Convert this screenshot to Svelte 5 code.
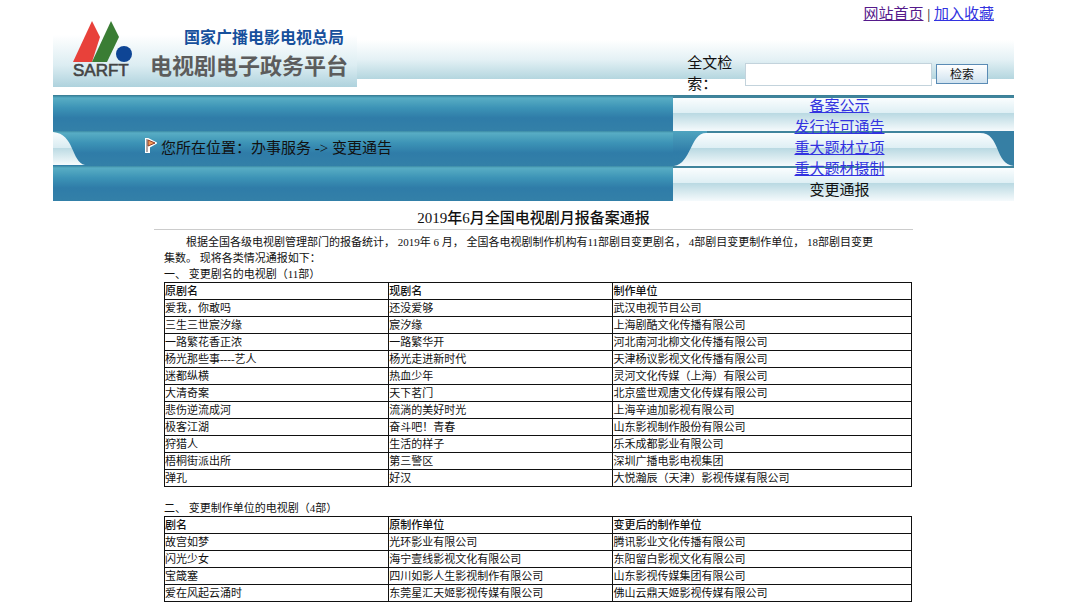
<script lang="ts">
  type Section = { heading: string; columns: string[]; rows: string[][] };

  let keyword = '';

  const navItems = ['备案公示', '发行许可通告', '重大题材立项', '重大题材摄制'];

  const sections: Section[] = [
    {
      heading: '一、 变更剧名的电视剧（11部）',
      columns: ['原剧名', '现剧名', '制作单位'],
      rows: [
        ['爱我，你敢吗', '还没爱够', '武汉电视节目公司'],
        ['三生三世宸汐缘', '宸汐缘', '上海剧酷文化传播有限公司'],
        ['一路繁花香正浓', '一路繁华开', '河北南河北柳文化传播有限公司'],
        ['杨光那些事----艺人', '杨光走进新时代', '天津杨议影视文化传播有限公司'],
        ['迷都纵横', '热血少年', '灵河文化传媒（上海）有限公司'],
        ['大清奇案', '天下茗门', '北京盛世观唐文化传媒有限公司'],
        ['悲伤逆流成河', '流淌的美好时光', '上海辛迪加影视有限公司'],
        ['极客江湖', '奋斗吧！青春', '山东影视制作股份有限公司'],
        ['狩猎人', '生活的样子', '乐禾成都影业有限公司'],
        ['梧桐街派出所', '第三警区', '深圳广播电影电视集团'],
        ['弹孔', '好汉', '大悦瀚辰（天津）影视传媒有限公司'],
      ],
    },
    {
      heading: '二、 变更制作单位的电视剧（4部）',
      columns: ['剧名', '原制作单位', '变更后的制作单位'],
      rows: [
        ['故宫如梦', '光环影业有限公司', '腾讯影业文化传播有限公司'],
        ['闪光少女', '海宁壹线影视文化有限公司', '东阳留白影视文化有限公司'],
        ['宝箴塞', '四川如影人生影视制作有限公司', '山东影视传媒集团有限公司'],
        ['爱在风起云涌时', '东莞星汇天姬影视传媒有限公司', '佛山云鼎天姬影视传媒有限公司'],
      ],
    },
  ];
</script>

<div class="page">
  <header class="header">
    <div class="logo">
      <svg class="emblem" viewBox="0 0 60 58" role="img" aria-label="SARFT">
        <path d="M19 0 L27 16 L19 41 L0 41 Z" fill="#e8413a" />
        <path d="M38 0 L46 16 L34 41 L19 41 Z" fill="#3a7d34" />
        <circle cx="51" cy="33" r="8" fill="#0e4595" />
        <text x="0" y="55" class="emblem-text">SARFT</text>
      </svg>
      <div class="names">
        <span class="org">国家广播电影电视总局</span>
        <span class="platform">电视剧电子政务平台</span>
      </div>
    </div>
    <div class="tools">
      <div class="top-links">
        <a class="visited" href="#home">网站首页</a> | <a href="#favorite">加入收藏</a>
      </div>
      <form class="search" on:submit|preventDefault>
        <label for="keyword">全文检索：</label>
        <input id="keyword" type="text" bind:value={keyword} />
        <button type="submit">检索</button>
      </form>
    </div>
  </header>

  <div class="banner">
    <div class="location">
      <svg class="curve start" viewBox="0 0 34 35" preserveAspectRatio="none" aria-hidden="true">
        <defs>
          <linearGradient id="pale" x1="0" y1="0" x2="0" y2="1">
            <stop offset="0" stop-color="#f8fcfd" />
            <stop offset="0.5" stop-color="#d8ebf1" />
            <stop offset="0.5" stop-color="#bddbe4" />
            <stop offset="1" stop-color="#f6fbfc" />
          </linearGradient>
        </defs>
        <path d="M0 1 C22 3 18 31 32 34 L0 34 Z" fill="url(#pale)" />
      </svg>
      <svg class="flag" viewBox="0 0 12 15" aria-hidden="true">
        <path d="M1 1 H3 L11 5 L4 9 V14 H1 Z" fill="#fff" stroke="#fff" stroke-width="2" />
        <path d="M3 2 L10 5 L3 8 Z" fill="#f39a56" stroke="#8f3e28" stroke-width="1" />
        <path d="M2 1 V14" stroke="#6b5550" stroke-width="1" />
      </svg>
      <span>您所在位置：办事服务 -&gt; 变更通告</span>
    </div>
    <nav class="nav">
      <svg class="curve start" viewBox="0 0 34 35" preserveAspectRatio="none" aria-hidden="true">
        <defs>
          <linearGradient id="teal" x1="0" y1="0" x2="0" y2="1">
            <stop offset="0" stop-color="#4fa4bf" />
            <stop offset="0.6" stop-color="#2f7ca8" />
            <stop offset="1" stop-color="#3380a8" />
          </linearGradient>
        </defs>
        <path d="M0 0 H34 V2 C17 1 19 32 1 35 H0 Z" fill="url(#teal)" />
      </svg>
      <svg class="curve end" viewBox="0 0 34 35" preserveAspectRatio="none" aria-hidden="true">
        <path d="M0 0 H34 V35 C14 33 21 2 0 2 Z" fill="#367fa4" />
      </svg>
      <ul>
        {#each navItems as item}
          <li><a href="#{item}">{item}</a></li>
        {/each}
        <li>变更通报</li>
      </ul>
    </nav>
  </div>

  <main class="content">
    <h1>2019年6月全国电视剧月报备案通报</h1>
    <div class="report">
      <p>
        根据全国各级电视剧管理部门的报备统计， 2019年 6 月， 全国各电视剧制作机构有11部剧目变更剧名， 4部剧目变更制作单位， 18部剧目变更<br />集数。 现将各类情况通报如下：
      </p>
      {#each sections as section}
        <section>
          <h2>{section.heading}</h2>
          <table>
            <thead>
              <tr>
                {#each section.columns as column}
                  <th scope="col">{column}</th>
                {/each}
              </tr>
            </thead>
            <tbody>
              {#each section.rows as row}
                <tr>
                  {#each row as cell}
                    <td>{cell}</td>
                  {/each}
                </tr>
              {/each}
            </tbody>
          </table>
        </section>
      {/each}
    </div>
  </main>
</div>

<style>
  :global(body) {
    margin: 0;
    background: #fff;
  }

  .page {
    margin: 0 66px 0 53px;
    color: #111;
    font-family: 'Liberation Serif', 'Noto Sans CJK SC', serif;
    font-size: 15px;
    line-height: 21px;
  }

  a {
    color: #3333e0;
  }

  a.visited {
    color: #551a8b;
  }

  .header {
    display: flex;
    justify-content: space-between;
    background: linear-gradient(#fff, #e4f1f5 50%, #b4d6df) 0 40px / 100% 39px no-repeat;
  }

  .logo {
    display: flex;
    box-sizing: border-box;
    width: 304px;
    height: 87px;
    margin-bottom: 8px;
    padding: 21px 0 0 20px;
    gap: 17px;
    background: linear-gradient(#fff 40%, #dcedf2 75%, #aed2dd);
  }

  .emblem {
    flex: none;
    width: 60px;
    height: 58px;
  }

  .emblem-text {
    fill: #444;
    stroke: #444;
    stroke-width: 0.6;
    font-family: 'Liberation Sans', sans-serif;
    font-size: 17px;
  }

  .names {
    display: flex;
    flex-direction: column;
    align-items: flex-end;
    padding-top: 3px;
    font-family: 'Noto Sans CJK SC', sans-serif;
    white-space: nowrap;
  }

  .org {
    padding-right: 4px;
    color: #17509c;
    font-size: 16px;
    font-weight: 700;
    line-height: 24px;
  }

  .platform {
    color: #5c5c5c;
    font-size: 22px;
    font-weight: 700;
    line-height: 32px;
  }

  .tools {
    display: flex;
    flex-direction: column;
    justify-content: space-between;
    width: 34%;
  }

  .top-links {
    padding: 4px 20px 0 0;
    text-align: right;
  }

  .search {
    display: flex;
    align-items: center;
    gap: 4px;
    padding-right: 26px;
  }

  .search label {
    width: 54px;
  }

  .search input {
    flex: 1;
    min-width: 0;
    box-sizing: border-box;
    height: 23px;
    border: 1px solid #c3d3dc;
    background: #fff;
  }

  .search button {
    width: 52px;
    height: 20px;
    padding: 0;
    border: 1px solid #5a8bb5;
    background: linear-gradient(#fff, #cfe2ef);
    color: #111;
    font-family: 'Noto Sans CJK SC', sans-serif;
    font-size: 12px;
    line-height: 18px;
  }

  .banner {
    display: grid;
    grid-template-columns: 620fr 341fr;
    border-top: 1px solid #3b8097;
  }

  .location,
  .nav {
    position: relative;
    background-size: 100% 35px;
  }

  .location {
    display: flex;
    align-items: center;
    gap: 4px;
    padding-left: 92px;
    background-image: linear-gradient(#3b8aa5, #58adc4 2px, #3c93b6 12px, #2f7ca8 22px, #3380a8);
  }

  .nav {
    background-image: linear-gradient(#3f849c 2px, #fafdfe 2px, #deeff4 17px, #b9d9e2 17px, #f5fafc);
  }

  .flag {
    width: 12px;
    height: 15px;
    margin-bottom: 6px;
  }

  .curve {
    position: absolute;
    top: 35px;
    width: 34px;
    height: 35px;
  }

  .curve.start {
    left: 0;
  }

  .curve.end {
    right: 0;
  }

  .nav ul {
    position: relative;
    margin: 0;
    padding: 0 8px 0 0;
    list-style: none;
    text-align: center;
  }

  .content {
    width: 79%;
    margin: 0 auto;
    padding-top: 7px;
  }

  h1 {
    margin: 0;
    border-bottom: 1px solid #ccc;
    font-size: 15px;
    font-weight: 500;
    line-height: 21px;
    text-align: center;
  }

  .report {
    padding: 4px 1px 8px 10px;
    font-size: 11px;
    line-height: 16px;
  }

  p {
    margin: 0;
    text-indent: 2em;
  }

  section + section {
    margin-top: 13px;
  }

  h2 {
    margin: 0;
    font-size: 11px;
    font-weight: 400;
  }

  table {
    width: 100%;
    table-layout: fixed;
    border-collapse: collapse;
  }

  th,
  td {
    padding: 0;
    border: 1px solid #111;
    text-align: left;
    white-space: nowrap;
  }

  th {
    width: 30%;
    font-weight: 500;
  }

  th:last-child {
    width: 40%;
  }
</style>
